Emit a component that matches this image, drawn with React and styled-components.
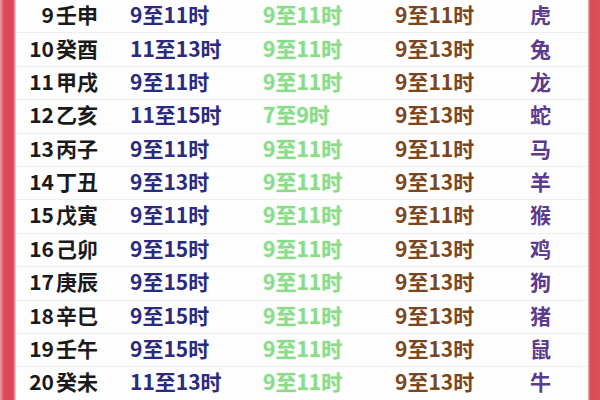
import styled, { createGlobalStyle } from "styled-components";

const Global = createGlobalStyle`
  html, body {
    margin: 0;
    padding: 0;
    background: #ffffff;
    overflow: hidden;
  }
`;

const Page = styled.div`
  display: flex;
  width: 600px;
  height: 400px;
  overflow: hidden;
  background: #fdfdfd;
`;

const SideBar = styled.div`
  width: ${(p) => p.w}px;
  flex-shrink: 0;
  background: ${(p) => p.bg};
`;

const Table = styled.div`
  flex: 1;
  display: flex;
  flex-direction: column;
  font-family: "Noto Sans CJK SC", "Noto Sans", sans-serif;
  font-weight: 700;
  font-size: 21px;
`;

const Row = styled.div`
  display: grid;
  grid-template-columns: 38px 74px 132px 132px 128px 1fr;
  align-items: center;
  height: 33.4px;
  flex-shrink: 0;
  padding-bottom: 4px;
  border-bottom: 1px solid #eeeeee;
  box-sizing: border-box;
  line-height: 1.15;
`;

const Cell = styled.div`
  color: ${(p) => p.color};
  text-align: ${(p) => p.align || "left"};
  padding-left: ${(p) => p.pl || 0}px;
  white-space: nowrap;
  text-shadow: ${(p) => p.glow || "none"};
`;

const rows = [
  [9, "壬申", "9至11时", "9至11时", "9至11时", "虎"],
  [10, "癸酉", "11至13时", "9至11时", "9至13时", "兔"],
  [11, "甲戌", "9至11时", "9至11时", "9至11时", "龙"],
  [12, "乙亥", "11至15时", "7至9时", "9至13时", "蛇"],
  [13, "丙子", "9至11时", "9至11时", "9至11时", "马"],
  [14, "丁丑", "9至13时", "9至11时", "9至13时", "羊"],
  [15, "戊寅", "9至11时", "9至11时", "9至11时", "猴"],
  [16, "己卯", "9至15时", "9至11时", "9至13时", "鸡"],
  [17, "庚辰", "9至15时", "9至11时", "9至13时", "狗"],
  [18, "辛巳", "9至15时", "9至11时", "9至13时", "猪"],
  [19, "壬午", "9至15时", "9至11时", "9至13时", "鼠"],
  [20, "癸未", "11至13时", "9至11时", "9至13时", "牛"],
];

export default function App() {
  return (
    <Page>
      <Global />
      <SideBar w={16} bg="linear-gradient(90deg, #ef9aa2 0px, #dc4a5a 4px, #d94556 13px, #f3d6d9 16px)" />
      <Table>
        {rows.map(([n, gz, a, b, c, animal]) => (
          <Row key={n}>
            <Cell color="#1a1a1a" align="right">{n}</Cell>
            <Cell color="#1a1a1a" pl={2}>{gz}</Cell>
            <Cell color="#2b2a7c" pl={2}>{a}</Cell>
            <Cell color="#8cdb8c" pl={3} glow="0 0 2px #bff0bf">{b}</Cell>
            <Cell color="#7a4620" pl={3}>{c}</Cell>
            <Cell color="#5c3a8e" pl={10}>{animal}</Cell>
          </Row>
        ))}
      </Table>
      <SideBar w={12} bg="linear-gradient(90deg, #f1c9cd 0px, #db4b58 2px, #dd4f5b 12px)" />
    </Page>
  );
}
